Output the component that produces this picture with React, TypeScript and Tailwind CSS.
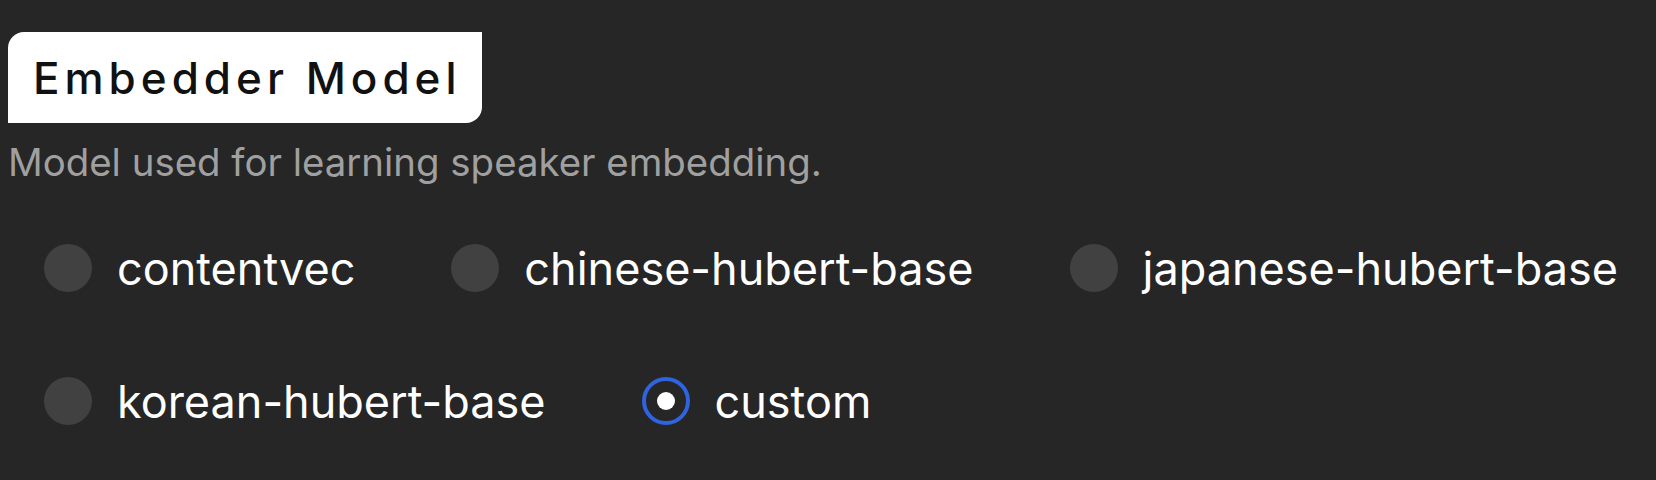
import { useState } from 'react';

const options = [
  'contentvec',
  'chinese-hubert-base',
  'japanese-hubert-base',
  'korean-hubert-base',
  'custom',
];

export default function App() {
  const [selected, setSelected] = useState('custom');

  return (
    <div className="min-h-[480px] w-full bg-[#262626] pt-[32px] pl-[8px] font-['Inter',sans-serif]">
      {/* Section title */}
      <div className="inline-flex h-[91px] items-center rounded-tl-2xl rounded-br-2xl bg-white pl-[25px] pr-[20px]">
        <h2 className="text-[44px] font-medium tracking-[5px] text-[#111111]">
          Embedder Model
        </h2>
      </div>
      <p className="mt-[15px] text-[38.4px] leading-[48px] text-[#a0a0a0]">
        Model used for learning speaker embedding.
      </p>

      {/* Radio group */}
      <div
        className="mt-[58px] flex flex-wrap gap-x-[96px] gap-y-[85px] pl-[36px]"
        role="radiogroup"
        aria-label="Embedder Model"
      >
        {options.map((opt) => {
          const active = selected === opt;
          return (
            <label
              key={opt}
              className="flex h-[48px] cursor-pointer items-center gap-[25px]"
              onClick={() => setSelected(opt)}
            >
              <span
                className={`flex h-[48px] w-[48px] items-center justify-center rounded-full ${
                  active ? 'border-[4px] border-[#2f63e0] bg-[#262626]' : 'bg-[#414141]'
                }`}
              >
                {active && <span className="h-[18px] w-[18px] rounded-full bg-white" />}
              </span>
              <span className="text-[45px] leading-none text-white">{opt}</span>
            </label>
          );
        })}
      </div>
    </div>
  );
}
